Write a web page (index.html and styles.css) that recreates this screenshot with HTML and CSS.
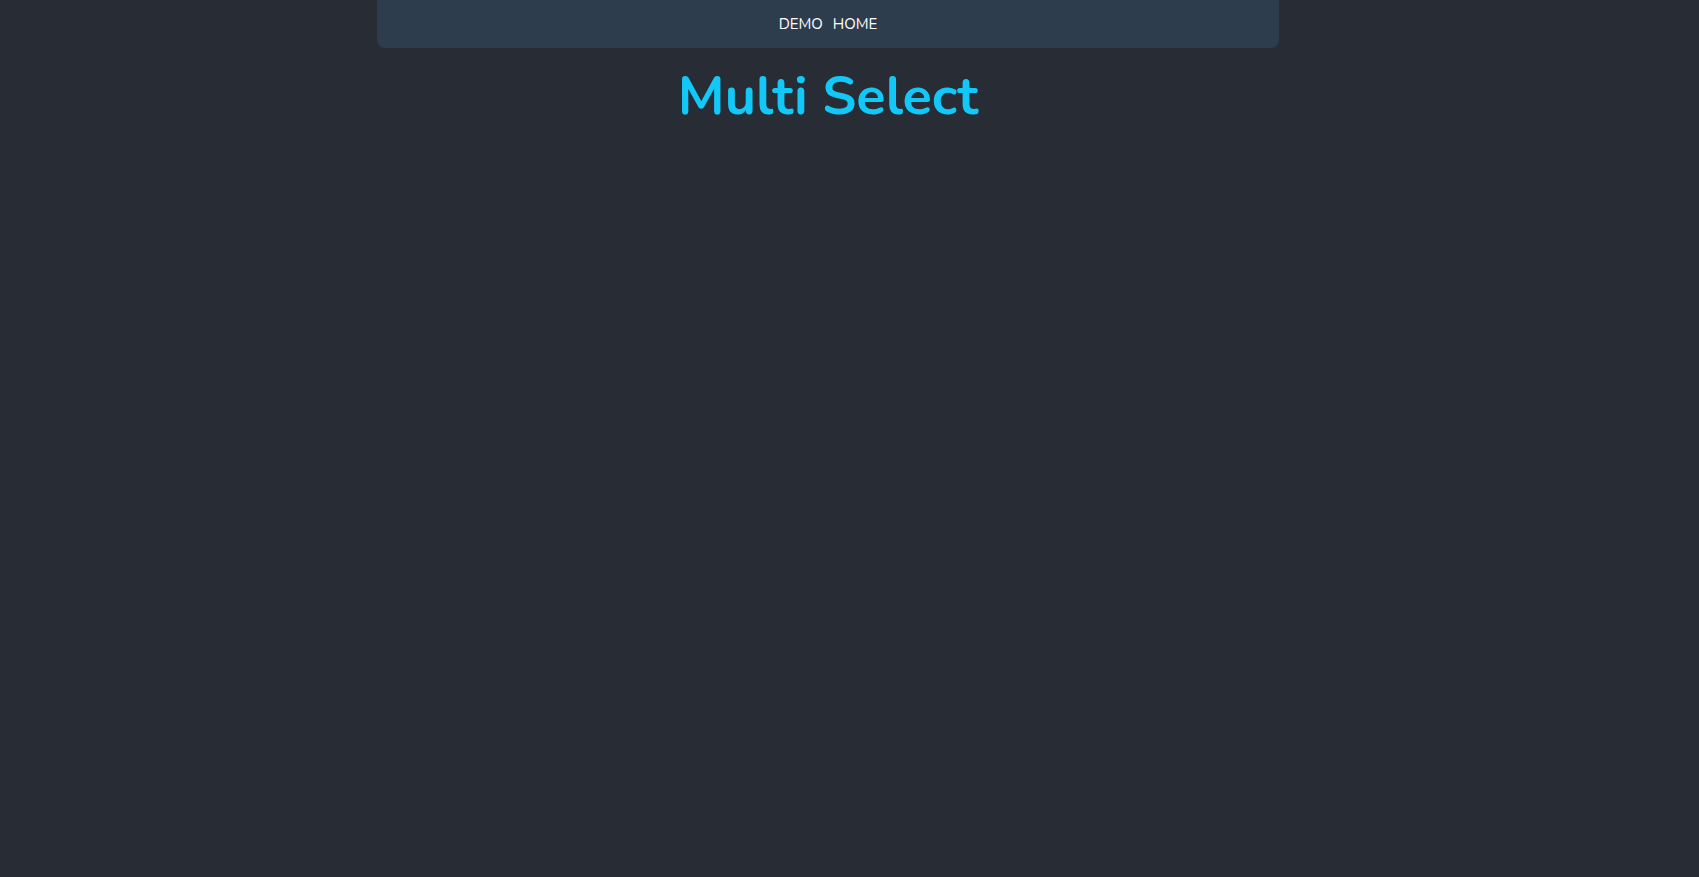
FILE: index.html
```html
<!DOCTYPE html>
<html lang="en">
<head>
<meta charset="utf-8">
<title>Multi Select</title>
<link rel="stylesheet" href="styles.css">
</head>
<body>
<div class="app">
  <nav class="navbar">
    <a class="nav-link" href="#">DEMO</a>
    <a class="nav-link" href="#">HOME</a>
  </nav>
  <h1 class="title">Multi Select</h1>
</div>
</body>
</html>
```
FILE: styles.css
```css
html, body {
  margin: 0;
  padding: 0;
  height: 100%;
}
body {
  background: #282c35;
  font-family: "Nunito", "Lato", "Open Sans", sans-serif;
  color: #ffffff;
}
.app {
  width: 902px;
  margin-left: 377px;
}
.navbar {
  height: 48px;
  background: #2e3d4d;
  border-radius: 0 0 8px 8px;
  display: flex;
  align-items: center;
  justify-content: center;
  gap: 10px;
}
.nav-link {
  color: #ffffff;
  text-decoration: none;
  font-size: 15px;
}
.title {
  margin: 12px 0 0;
  text-align: center;
  color: #12c8f9;
  font-size: 54px;
  font-weight: 700;
  line-height: 72px;
}
```
